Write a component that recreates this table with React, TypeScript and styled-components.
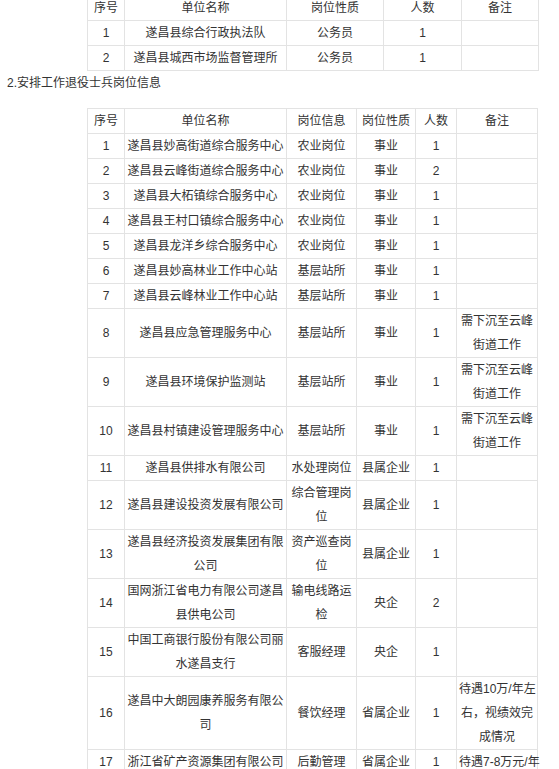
import React from "react";
import styled, { createGlobalStyle } from "styled-components";

const Global = createGlobalStyle`
  html, body { margin: 0; padding: 0; background: #fff; }
  body {
    font-family: "Liberation Sans", "Noto Sans CJK SC", sans-serif;
    font-size: 12px;
    color: #333;
  }
`;

const Page = styled.div`
  margin-top: -5px;
  padding-left: 7px;
`;

const Table = styled.table<{ $width: number }>`
  border-collapse: collapse;
  table-layout: fixed;
  width: ${(p) => p.$width}px;
  margin-left: 80px;
`;

const Cell = styled.td`
  border: 1px solid #e3e3e3;
  padding: 0 2px;
  height: 24px;
  line-height: 24px;
  text-align: center;
  vertical-align: middle;
  white-space: pre;
  color: #333;
  overflow: visible;
`;

const HeadCell = styled(Cell)``;

const Heading = styled.p`
  margin: 0 0 13px 0;
  line-height: 24px;
  font-size: 12px;
  color: #333;
`;

type Row = string[];

const table1Cols = [37, 162, 97, 78, 77];
const table1Head = ["序号", "单位名称", "岗位性质", "人数", "备注"];
const table1Rows: Row[] = [
  ["1", "遂昌县综合行政执法队", "公务员", "1", ""],
  ["2", "遂昌县城西市场监督管理所", "公务员", "1", ""],
];

const table2Cols = [37, 162, 70, 59, 41, 81];
const table2Head = ["序号", "单位名称", "岗位信息", "岗位性质", "人数", "备注"];
const sink = "需下沉至云峰\n街道工作";
const table2Rows: Row[] = [
  ["1", "遂昌县妙高街道综合服务中心", "农业岗位", "事业", "1", ""],
  ["2", "遂昌县云峰街道综合服务中心", "农业岗位", "事业", "2", ""],
  ["3", "遂昌县大柘镇综合服务中心", "农业岗位", "事业", "1", ""],
  ["4", "遂昌县王村口镇综合服务中心", "农业岗位", "事业", "1", ""],
  ["5", "遂昌县龙洋乡综合服务中心", "农业岗位", "事业", "1", ""],
  ["6", "遂昌县妙高林业工作中心站", "基层站所", "事业", "1", ""],
  ["7", "遂昌县云峰林业工作中心站", "基层站所", "事业", "1", ""],
  ["8", "遂昌县应急管理服务中心", "基层站所", "事业", "1", sink],
  ["9", "遂昌县环境保护监测站", "基层站所", "事业", "1", sink],
  ["10", "遂昌县村镇建设管理服务中心", "基层站所", "事业", "1", sink],
  ["11", "遂昌县供排水有限公司", "水处理岗位", "县属企业", "1", ""],
  ["12", "遂昌县建设投资发展有限公司", "综合管理岗\n位", "县属企业", "1", ""],
  ["13", "遂昌县经济投资发展集团有限\n公司", "资产巡查岗\n位", "县属企业", "1", ""],
  ["14", "国网浙江省电力有限公司遂昌\n县供电公司", "输电线路运\n检", "央企", "2", ""],
  ["15", "中国工商银行股份有限公司丽\n水遂昌支行", "客服经理", "央企", "1", ""],
  ["16", "遂昌中大朗园康养服务有限公\n司", "餐饮经理", "省属企业", "1", "待遇10万/年左\n右，视绩效完\n成情况"],
  ["17", "浙江省矿产资源集团有限公司", "后勤管理", "省属企业", "1", "待遇7-8万元/年"],
];

function DataTable({ cols, head, rows }: { cols: number[]; head: string[]; rows: Row[] }) {
  const width = cols.reduce((a, b) => a + b, 0) + 1;
  return (
    <Table $width={width}>
      <colgroup>
        {cols.map((w, i) => (
          <col key={i} style={{ width: w }} />
        ))}
      </colgroup>
      <tbody>
        <tr>
          {head.map((h, i) => (
            <HeadCell key={i}>{h}</HeadCell>
          ))}
        </tr>
        {rows.map((r, ri) => (
          <tr key={ri}>
            {r.map((c, ci) => (
              <Cell key={ci}>{c}</Cell>
            ))}
          </tr>
        ))}
      </tbody>
    </Table>
  );
}

export default function App() {
  return (
    <>
      <Global />
      <Page>
        <DataTable cols={table1Cols} head={table1Head} rows={table1Rows} />
        <Heading>2.安排工作退役士兵岗位信息</Heading>
        <DataTable cols={table2Cols} head={table2Head} rows={table2Rows} />
      </Page>
    </>
  );
}
